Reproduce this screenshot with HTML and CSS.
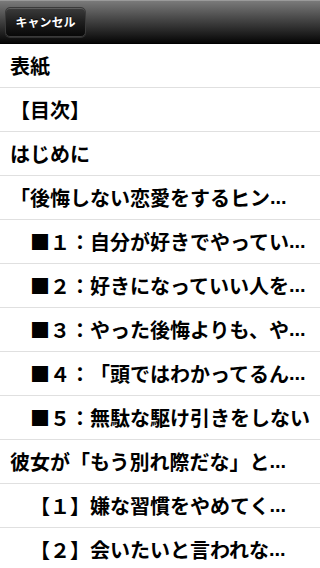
FILE: index.html
```html
<!DOCTYPE html>
<html lang="ja">
<head>
<meta charset="utf-8">
<link rel="stylesheet" href="styles.css">
</head>
<body>
<div class="toolbar">
  <button class="bar-btn">キャンセル</button>
</div>
<ul class="toc">
  <li class="row l0">表紙</li>
  <li class="row l0">【目次】</li>
  <li class="row l0">はじめに</li>
  <li class="row l0"><span class="cjk">「後悔しない恋愛をするヒン</span>...</li>
  <li class="row l1"><span class="cjk">■１：自分が好きでやってい</span>...</li>
  <li class="row l1"><span class="cjk">■２：好きになっていい人を</span>...</li>
  <li class="row l1"><span class="cjk">■３：やった後悔よりも、や</span>...</li>
  <li class="row l1"><span class="cjk">■４：「頭ではわかってるん</span>...</li>
  <li class="row l1"><span class="cjk">■５：無駄な駆け引きをしない</span></li>
  <li class="row l0"><span class="cjk">彼女が「もう別れ際だな」と</span>...</li>
  <li class="row l1"><span class="cjk">【１】嫌な習慣をやめてく</span>...</li>
  <li class="row l1"><span class="cjk">【２】会いたいと言われな</span>...</li>
</ul>
</body>
</html>
```

FILE: styles.css
```css
html, body {
  margin: 0;
  padding: 0;
  background: #fff;
}
body {
  width: 320px;
  height: 568px;
  overflow: hidden;
  font-family: "Liberation Sans", "Noto Sans CJK JP", sans-serif;
  text-spacing-trim: space-all;
}
.toolbar {
  height: 44px;
  box-sizing: border-box;
  border-top: 1px solid #9a9a9a;
  border-bottom: 1px solid #000;
  background: linear-gradient(to bottom, #7a7a7a 0%, #4a4a4a 40%, #1c1c1c 80%, #050505 100%);
  display: flex;
  align-items: center;
  padding-left: 5px;
}
.bar-btn {
  width: 81px;
  height: 30px;
  margin-top: -1px;
  border: 1px solid #3a3a3a;
  border-radius: 5px;
  box-shadow: inset 0 1px 0 rgba(255,255,255,0.18), 0 1px 0 rgba(255,255,255,0.12);
  background: linear-gradient(to bottom, #3c3c3c 0%, #1e1e1e 50%, #080808 100%);
  color: #fff;
  font-family: "Noto Sans CJK JP", sans-serif;
  font-weight: bold;
  font-size: 12px;
  text-shadow: 0 -1px 0 rgba(0,0,0,0.8);
  padding: 0;
}
.toc {
  list-style: none;
  margin: 0;
  padding: 0;
}
.row {
  height: 43px;
  border-bottom: 1px solid #e0e0e0;
  display: flex;
  align-items: center;
  font-size: 20px;
  font-weight: bold;
  color: #000;
  white-space: nowrap;
  overflow: hidden;
}
.cjk {
  font-family: "Noto Sans CJK JP", sans-serif;
  text-spacing-trim: space-all;
}
.l0 {
  padding-left: 10px;
}
.l1 {
  padding-left: 30px;
}
```
